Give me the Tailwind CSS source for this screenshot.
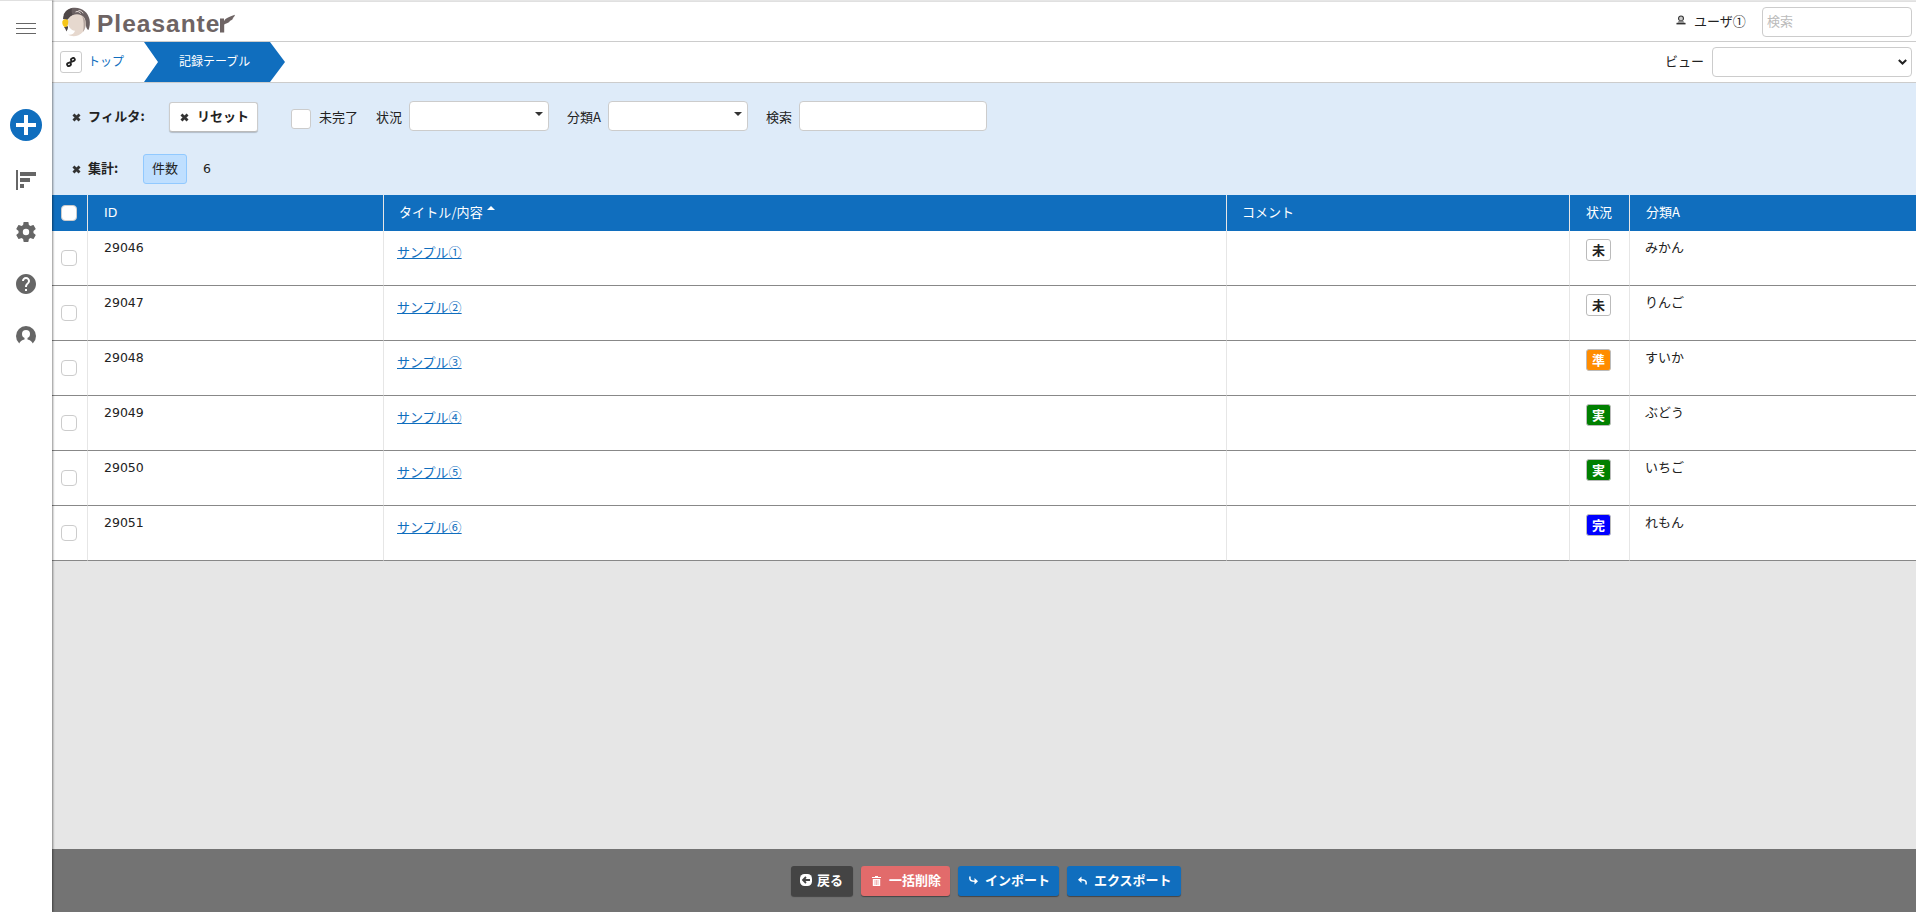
<!DOCTYPE html>
<html lang="ja">
<head>
<meta charset="utf-8">
<title>記録テーブル - Pleasanter</title>
<script src="https://cdn.jsdelivr.net/npm/@tailwindcss/browser@4"></script>
</head>
<body class="flex h-[912px] w-[1916px] overflow-hidden bg-[#e6e6e6] font-['Noto_Sans_CJK_JP',sans-serif] text-[13px] leading-5 text-[#222]">
<svg class="hidden">
  <symbol id="x" viewBox="0 0 8 8"><path d="M1.3 1.3 6.7 6.7M6.7 1.3 1.3 6.7" stroke="#333" stroke-width="2.5"/></symbol>
  <symbol id="caret" viewBox="0 0 8 4"><path d="M0 0h8L4 4z" fill="#333"/></symbol>
</svg>

<!-- Side navigation -->
<nav class="relative z-10 flex w-[52px] shrink-0 flex-col items-center border-t border-[#e0e0e0] bg-white shadow-[1px_0_2px_rgba(0,0,0,0.45)]">
  <svg class="mt-[21px] h-3 w-5" viewBox="0 0 20 12"><path d="M0 1.5h20M0 6.5h20M0 11.5h20" stroke="#666" stroke-width="1"/></svg>
  <svg class="mt-[75px] size-8" viewBox="0 0 32 32"><circle cx="16" cy="16" r="16" fill="#106ebe"/><path d="M16 6v20M6 16h20" stroke="#fff" stroke-width="4"/></svg>
  <svg class="mt-[29px] size-5" viewBox="0 0 20 20" fill="#666"><path d="M0 0h2v20H0zM4 2h16v4H4zM4 8h10v4H4zM4 14h4v4H4z"/></svg>
  <svg class="mt-8 size-5" viewBox="2 2 20 20" fill="#666"><path d="M19.43 12.98c.04-.32.07-.64.07-.98s-.03-.66-.07-.98l2.11-1.65c.19-.15.24-.42.12-.64l-2-3.46c-.12-.22-.39-.3-.61-.22l-2.49 1c-.52-.4-1.08-.73-1.69-.98l-.38-2.65C14.46 2.18 14.25 2 14 2h-4c-.25 0-.46.18-.49.42l-.38 2.65c-.61.25-1.17.59-1.69.98l-2.49-1c-.23-.09-.49 0-.61.22l-2 3.46c-.13.22-.07.49.12.64l2.11 1.65c-.04.32-.07.65-.07.98s.03.66.07.98l-2.11 1.65c-.19.15-.24.42-.12.64l2 3.46c.12.22.39.3.61.22l2.49-1c.52.4 1.08.73 1.69.98l.38 2.65c.03.24.24.42.49.42h4c.25 0 .46-.18.49-.42l.38-2.65c.61-.25 1.17-.59 1.69-.98l2.49 1c.23.09.49 0 .61-.22l2-3.46c.12-.22.07-.49-.12-.64l-2.11-1.65zM12 15.2a3.2 3.2 0 1 1 0-6.400 3.200 3.200 0 0 1 0 6.400z"/></svg>
  <svg class="mt-8 size-5" viewBox="2 2 20 20" fill="#666"><path d="M12 2C6.480 2 2 6.480 2 12s4.480 10 10 10 10-4.480 10-10S17.520 2 12 2zm1 17h-2v-2h2v2zm2.070-7.750-.9.920C13.450 12.900 13 13.500 13 15h-2v-.5c0-1.100.45-2.100 1.170-2.830l1.240-1.260c.37-.36.590-.86.590-1.410 0-1.100-.9-2-2-2s-2 .9-2 2H8c0-2.210 1.790-4 4-4s4 1.790 4 4c0 .880-.36 1.680-.93 2.250z"/></svg>
  <svg class="mt-8 size-5" viewBox="0 0 20 20"><circle cx="10" cy="10" r="10" fill="#666"/><circle cx="10" cy="8" r="4" fill="#fff"/><path d="M8.500 11h3v2.500c2.500.5 4.800 1.800 5.300 4.300V20H3.200v-2.200c.5-2.500 2.800-3.800 5.300-4.300z" fill="#fff"/></svg>
</nav>

<div class="flex min-w-0 flex-1 flex-col">
  <!-- Header -->
  <header class="mt-px flex h-[41px] shrink-0 items-center border-t border-b border-t-[#e0e0e0] border-b-[#ccc] bg-white pr-1 pl-[9px]">
    <svg class="h-[30px] w-[30px]" viewBox="0 0 30 30">
      <path d="M2.500 8C5 3 9 .6 14 .8c8 .2 13 5 14.500 11.500.8 4 .2 7.500-1 10.700-1.500-.5-2-2-2.500-4C23.500 12 18 7 8 9z" fill="#6a6061"/>
      <path d="M2 12C2.500 6 6 2 11 1.300c-.8 3-.2 5 .8 6.700L6 13z" fill="#4f4748"/>
      <path d="M8 11c4-5 12-5 15.500 0 3 6 1 14-6 17.200-4 1.600-8 1-10.500-.5 4 .3 6.500-1.500 7-4-4-.3-7-4-7-7.700 0-2 0-3.500 1-5z" fill="#e6d8ce"/>
      <path d="M21 8.500c4.500 4.500 5 11 1 16.500 1-6 1-11-1-16.500z" fill="#b3a59f"/>
      <path d="M1.300 14.500c1-2.500 4-3 6-1 0 3-.3 5-2 7.500l-1-.5c-2-1-3.300-3-3-6z" fill="#f5c518"/>
      <path d="M3 20c1.800 0 3-.2 4-1 .3 2-.5 4-1.700 5.500C5 22.500 4 21.500 3 20z" fill="#4f4748"/>
      <path d="M14.500 5c2-1 4-.3 5 1.500M17.500 3.500c2 0 3.800 1 4.600 2.800" fill="none" stroke="#e6dcd8" stroke-width="1"/>
    </svg>
    <div class="mt-[3px] ml-[6px] flex items-start">
      <span class="font-['Liberation_Sans',sans-serif] text-[24.500px] leading-[33px] font-bold tracking-[1px] text-[#6e6464]">Pleasante</span>
      <svg class="mt-[7px] h-[19px] w-[15px]" viewBox="0 0 15 19"><path d="M0 4.500h4v2.800c1-2.800 5-4.300 11-6.500-.5 2-1.500 3-2.700 3.500l1 .3C12 6 10.500 7 9.300 7.200l.5.500C8 9 6 9.500 4.200 10.500V18.500H0z" fill="#6e6464"/></svg>
    </div>
    <svg class="mr-px mb-[3px] ml-auto h-[10px] w-[10px]" viewBox="0 0 11 10"><circle cx="5.500" cy="3.300" r="2.700" fill="#ccc" stroke="#333" stroke-width="1.200"/><path d="M3.500 5.500 1.500 8h8l-2-2.500z" fill="#888"/><path d="M.5 9h10" stroke="#333" stroke-width="1.700"/></svg>
    <span class="mb-[2px] ml-[7px] w-[52px]">ユーザ①</span>
    <div class="ml-4 flex h-[30px] w-[150px] items-center rounded border border-[#ccc] pb-[2px] pl-1 text-[#bbb]">検索</div>
  </header>

  <!-- Breadcrumb -->
  <div class="flex h-[41px] shrink-0 items-center border-b border-[#ccc] bg-white pr-1 pl-2">
    <div class="flex size-[22px] items-center justify-center rounded-[3px] border border-[#ccc]">
      <svg class="size-[10px]" viewBox="0 0 11 11" fill="none" stroke="#222" stroke-width="2"><rect x="5.500" y="1.300" width="4.200" height="3.400" rx="1.600" transform="rotate(-25 7.500 3)"/><rect x="1.200" y="6.300" width="4.200" height="3.400" rx="1.600" transform="rotate(-25 3.500 8)"/><path d="M4.500 6.500 6.500 4.500"/></svg>
    </div>
    <span class="mb-[2px] ml-[6px] w-[56px] text-[12px] text-[#106ebe]">トップ</span>
    <div class="flex h-10 w-[141px] items-center bg-[#106ebe] pb-[2px] pl-[35px] text-[12px] text-white [clip-path:polygon(0_0,126px_0,141px_20px,126px_40px,0_40px,14px_20px)]">記録テーブル</div>
    <span class="mb-[2px] ml-auto">ビュー</span>
    <div class="ml-[8px] flex h-[30px] w-[200px] items-center justify-end rounded border border-[#ccc] pr-[4px]">
      <svg class="h-[6px] w-[9px]" viewBox="0 0 9 6"><path d="M.8 1 4.500 4.500 8.200 1" fill="none" stroke="#222" stroke-width="2"/></svg>
    </div>
  </div>

  <!-- Filters and aggregation -->
  <section class="h-[112px] shrink-0 bg-[#deebf9]">
    <div class="flex h-[68px] items-center pl-[20px]">
      <svg class="size-[9px]"><use href="#x"/></svg>
      <span class="mb-[2px] ml-[7px] w-[81px] font-bold tracking-[0.200px] whitespace-nowrap">フィルタ:</span>
      <div class="flex h-[30px] w-[89px] items-center rounded-[3px] border border-[#ccc] border-b-[#bbb] bg-white pl-[10px] font-bold shadow-[0_1px_1px_rgba(0,0,0,0.2)]">
        <svg class="size-[9px]"><use href="#x"/></svg><span class="mb-[2px] ml-[8px] whitespace-nowrap">リセット</span>
      </div>
      <div class="mt-[4px] ml-[33px] size-5 rounded-[3px] border border-[#ccc] bg-white"></div>
      <span class="ml-[8px] w-[57px]">未完了</span>
      <span class="w-[33px]">状況</span>
      <div class="mb-[2px] flex h-[30px] w-[140px] items-center justify-end rounded border border-[#ccc] bg-white pr-[5px] pb-1"><svg class="h-1 w-2"><use href="#caret"/></svg></div>
      <span class="ml-[18px] w-[41px]">分類A</span>
      <div class="mb-[2px] flex h-[30px] w-[140px] items-center justify-end rounded border border-[#ccc] bg-white pr-[5px] pb-1"><svg class="h-1 w-2"><use href="#caret"/></svg></div>
      <span class="ml-[18px] w-[33px]">検索</span>
      <div class="mb-[2px] h-[30px] w-[188px] rounded border border-[#ccc] bg-white"></div>
    </div>
    <div class="flex h-[36px] items-center pl-[20px]">
      <svg class="size-[9px]"><use href="#x"/></svg>
      <span class="mb-[2px] ml-[7px] w-[55px] font-bold">集計:</span>
      <div class="flex h-[30px] w-11 items-center justify-center rounded-[3px] border border-[#91c9ff] bg-[#bfdfff] pb-[2px]">件数</div>
      <span class="ml-[16px] font-['DejaVu_Sans',sans-serif] text-[12.500px]">6</span>
    </div>
  </section>

  <!-- Record grid -->
  <table class="w-[1864px] shrink-0 table-fixed border-separate border-spacing-0 bg-white text-left [&_tbody_td]:h-[55px] [&_tbody_td]:border-b [&_tbody_td]:border-b-[#888] [&_tbody_td]:align-top [&_td:not(:last-child)]:border-r [&_td:not(:last-child)]:border-r-[#e6e6e6] [&_th:not(:last-child)]:border-r [&_th:not(:last-child)]:border-r-[#e6e6e6]">
    <colgroup><col class="w-[36px]"><col class="w-[296px]"><col class="w-[843px]"><col class="w-[343px]"><col class="w-[60px]"><col></colgroup>
    <thead class="bg-[#106ebe] text-white">
      <tr class="h-9 [&_th]:p-0 [&_th]:font-normal">
        <th><div class="ml-[9px] size-4 rounded border border-[#ccc] bg-white"></div></th>
        <th><div class="pl-4 font-['DejaVu_Sans',sans-serif] text-[12.500px]">ID</div></th>
        <th><div class="flex items-start pb-[2px] pl-[15px]"><span class="w-[87px] tracking-[0.100px]">タイトル/内容</span><svg class="mt-1 ml-[1px] h-1 w-2" viewBox="0 0 8 4"><path d="M0 4h8L4 0z" fill="#fff"/></svg></div></th>
        <th><div class="pb-[2px] pl-[15px]">コメント</div></th>
        <th><div class="pb-[2px] pl-4">状況</div></th>
        <th><div class="pb-[2px] pl-4">分類A</div></th>
      </tr>
    </thead>
    <tbody>
      <tr>
        <td><div class="mt-[19px] ml-[9px] size-4 rounded border border-[#ccc]"></div></td>
        <td><div class="pt-[7px] pl-4 font-['DejaVu_Sans',sans-serif] text-[12.500px]">29046</div></td>
        <td><div class="pt-[11px] pl-[13px] text-[#106ebe]"><a class="underline">サンプル①</a></div></td>
        <td></td>
        <td><div class="mt-2 ml-4 flex h-[22px] w-[25px] items-center justify-center rounded-[3px] border border-[#bbb] bg-white pb-px font-bold text-[#222]">未</div></td>
        <td><div class="pt-[6px] pl-[15px]">みかん</div></td>
      </tr>
      <tr>
        <td><div class="mt-[19px] ml-[9px] size-4 rounded border border-[#ccc]"></div></td>
        <td><div class="pt-[7px] pl-4 font-['DejaVu_Sans',sans-serif] text-[12.500px]">29047</div></td>
        <td><div class="pt-[11px] pl-[13px] text-[#106ebe]"><a class="underline">サンプル②</a></div></td>
        <td></td>
        <td><div class="mt-2 ml-4 flex h-[22px] w-[25px] items-center justify-center rounded-[3px] border border-[#bbb] bg-white pb-px font-bold text-[#222]">未</div></td>
        <td><div class="pt-[6px] pl-[15px]">りんご</div></td>
      </tr>
      <tr>
        <td><div class="mt-[19px] ml-[9px] size-4 rounded border border-[#ccc]"></div></td>
        <td><div class="pt-[7px] pl-4 font-['DejaVu_Sans',sans-serif] text-[12.500px]">29048</div></td>
        <td><div class="pt-[11px] pl-[13px] text-[#106ebe]"><a class="underline">サンプル③</a></div></td>
        <td></td>
        <td><div class="mt-2 ml-4 flex h-[22px] w-[25px] items-center justify-center rounded-[3px] border border-[#bbb] bg-[#ff8c00] pb-px font-bold text-white">準</div></td>
        <td><div class="pt-[6px] pl-[15px]">すいか</div></td>
      </tr>
      <tr>
        <td><div class="mt-[19px] ml-[9px] size-4 rounded border border-[#ccc]"></div></td>
        <td><div class="pt-[7px] pl-4 font-['DejaVu_Sans',sans-serif] text-[12.500px]">29049</div></td>
        <td><div class="pt-[11px] pl-[13px] text-[#106ebe]"><a class="underline">サンプル④</a></div></td>
        <td></td>
        <td><div class="mt-2 ml-4 flex h-[22px] w-[25px] items-center justify-center rounded-[3px] border border-[#bbb] bg-[#008000] pb-px font-bold text-white">実</div></td>
        <td><div class="pt-[6px] pl-[15px]">ぶどう</div></td>
      </tr>
      <tr>
        <td><div class="mt-[19px] ml-[9px] size-4 rounded border border-[#ccc]"></div></td>
        <td><div class="pt-[7px] pl-4 font-['DejaVu_Sans',sans-serif] text-[12.500px]">29050</div></td>
        <td><div class="pt-[11px] pl-[13px] text-[#106ebe]"><a class="underline">サンプル⑤</a></div></td>
        <td></td>
        <td><div class="mt-2 ml-4 flex h-[22px] w-[25px] items-center justify-center rounded-[3px] border border-[#bbb] bg-[#008000] pb-px font-bold text-white">実</div></td>
        <td><div class="pt-[6px] pl-[15px]">いちご</div></td>
      </tr>
      <tr>
        <td><div class="mt-[19px] ml-[9px] size-4 rounded border border-[#ccc]"></div></td>
        <td><div class="pt-[7px] pl-4 font-['DejaVu_Sans',sans-serif] text-[12.500px]">29051</div></td>
        <td><div class="pt-[11px] pl-[13px] text-[#106ebe]"><a class="underline">サンプル⑥</a></div></td>
        <td></td>
        <td><div class="mt-2 ml-4 flex h-[22px] w-[25px] items-center justify-center rounded-[3px] border border-[#bbb] bg-[#0000ff] pb-px font-bold text-white">完</div></td>
        <td><div class="pt-[6px] pl-[15px]">れもん</div></td>
      </tr>
    </tbody>
  </table>

  <!-- Command bar -->
  <footer class="mt-auto flex h-[63px] shrink-0 gap-2 bg-[#737373] pt-[17px] pl-[739px] font-bold whitespace-nowrap text-white">
    <div class="flex h-[30px] w-[62px] items-center rounded-[3px] bg-[#444] pb-[2px] pl-[9px] shadow-[0_1px_1px_rgba(0,0,0,0.4)]">
      <svg class="size-3" viewBox="0 0 12 12"><rect width="12" height="12" rx="4.500" fill="#fff"/><path d="M10 6H4M6 3 3 6l3 3" fill="none" stroke="#444" stroke-width="1.800"/></svg><span class="ml-[5px]">戻る</span>
    </div>
    <div class="flex h-[30px] w-[89px] items-center rounded-[3px] bg-[#e26b6b] pb-[2px] pl-[11px] shadow-[0_1px_1px_rgba(0,0,0,0.4)]">
      <svg class="mt-[2px] h-[10px] w-[9px]" viewBox="0 0 9 10"><path d="M0 1.500h9M3 .5h3" stroke="#fff" stroke-width="1"/><path d="M.8 3h7.400v7H.8z" fill="#fff"/><path d="M3 4v5M4.500 4v5M6 4v5" stroke="#e26b6b" stroke-width=".5"/></svg><span class="ml-[8px]">一括削除</span>
    </div>
    <div class="flex h-[30px] w-[101px] items-center rounded-[3px] bg-[#106ebe] pb-[2px] pl-[11px] shadow-[0_1px_1px_rgba(0,0,0,0.4)]">
      <svg class="size-[9px]" viewBox="0 0 9 9"><path d="M.9.5v2C.9 4.500 2.500 5.300 6 5.300" fill="none" stroke="#fff" stroke-width="1.500"/><path d="M5.500 2v6.500L9 5.300z" fill="#fff"/></svg><span class="ml-[7px]">インポート</span>
    </div>
    <div class="flex h-[30px] w-[114px] items-center rounded-[3px] bg-[#106ebe] pb-[2px] pl-[11px] shadow-[0_1px_1px_rgba(0,0,0,0.4)]">
      <svg class="size-[9px]" viewBox="0 0 9 9"><path d="M8.100 8.500v-2C8.100 4.500 6.500 3.700 3 3.700" fill="none" stroke="#fff" stroke-width="1.500"/><path d="M3.500.5V7L0 3.700z" fill="#fff"/></svg><span class="ml-[7px]">エクスポート</span>
    </div>
  </footer>
</div>
</body>
</html>
